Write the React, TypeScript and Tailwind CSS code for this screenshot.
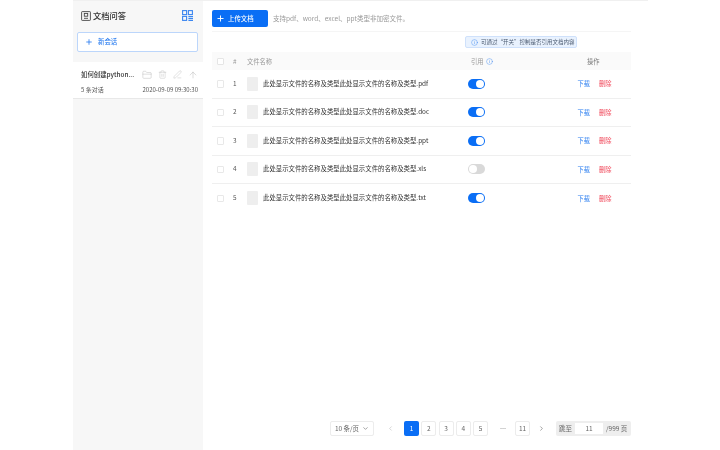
import React from "react";
import { Plus, FolderClosed, Trash2, PenLine, ArrowUp, Info, ChevronDown, ChevronLeft, ChevronRight } from "lucide-react";

const rows = [
  { n: 1, ext: "pdf", on: true },
  { n: 2, ext: "doc", on: true },
  { n: 3, ext: "ppt", on: true },
  { n: 4, ext: "xls", on: false },
  { n: 5, ext: "txt", on: true },
];

function Box({ children, active }: { children: React.ReactNode; active?: boolean }) {
  return (
    <div className={active ? "flex h-[15px] w-[15px] items-center justify-center rounded-[2px] bg-[#0a6ef5] text-white" : "flex h-[15px] w-[15px] items-center justify-center rounded-[2px] border border-[#ececec] bg-white text-[#666]"}>
      {children}
    </div>
  );
}

export default function App() {
  return (
    <div className="h-[450px] w-[720px] overflow-hidden bg-white text-[6.4px] text-[#333] blur-[0.25px] [font-family:'Noto_Sans_CJK_SC','Inter',sans-serif]">
      <div className="ml-[73px] flex h-full w-[575px] border-t border-[#f0f0f0]">
        <aside className="flex h-full w-[130px] shrink-0 flex-col bg-[#f7f7f7]">
          <div className="flex h-[31px] items-center justify-between pb-[2px] pl-[8px] pr-[10px]">
            <div className="flex items-center gap-[2px]">
              <svg width="10" height="10" viewBox="0 0 10 10" fill="none" stroke="#444" strokeWidth="0.9">
                <rect x="0.6" y="0.6" width="8.8" height="8.8" rx="0.6" />
                <rect x="3.3" y="2.4" width="3.4" height="2.8" />
                <path d="M3 7.3h4" />
              </svg>
              <span className="text-[8.25px] font-medium text-[#333]">文档问答</span>
            </div>
            <svg width="11" height="11" viewBox="0 0 11 11" fill="none" stroke="#3b86f0" strokeWidth="1.1">
              <rect x="0.6" y="0.6" width="4" height="4" />
              <rect x="0.6" y="6.4" width="4" height="4" />
              <rect x="6.4" y="0.6" width="4" height="4" />
              <path d="M6.4 6.6H11M6.4 8.5H11M6.4 10.4H11" />
            </svg>
          </div>
          <div className="ml-[4px] mr-[5px] flex h-[20px] items-center gap-[5px] rounded-[2px] border border-[#bcd6fb] bg-white pl-[7px] text-[#2b7ef0]">
            <Plus size={8} strokeWidth={2.5} />
            <span className="font-medium">新会话</span>
          </div>
          <div className="mt-[10px] flex h-[36.5px] flex-col justify-end gap-[6px] border-b border-[#e8e8e8] bg-white pb-[4px] pl-[8px] pr-[5px]">
            <div className="flex items-center justify-between">
              <span className="font-medium text-[#333]">如何创建python...</span>
              <div className="flex items-center gap-[6px] text-[#aaaaaa]">
                <FolderClosed size={10} strokeWidth={0.9} />
                <Trash2 size={9} strokeWidth={0.9} />
                <PenLine size={9} strokeWidth={0.9} />
                <ArrowUp size={10} strokeWidth={1} />
              </div>
            </div>
            <div className="flex items-center justify-between text-[6px] leading-[8px] text-[#555]">
              <span>5 条对话</span>
              <span>2020-09-09 09:30:30</span>
            </div>
          </div>
        </aside>
        <main className="flex min-w-0 flex-1 flex-col pl-[9px] pr-[17px]">
          <div className="flex h-[31px] items-start gap-[5px] border-b border-[#f5f5f5] pt-[9px]">
            <div className="flex h-[17px] w-[56px] items-center gap-[3px] rounded-[2px] bg-[#0a6ef5] pl-[4px] text-white">
              <Plus size={9} strokeWidth={2.5} />
              <span className="font-medium">上传文档</span>
            </div>
            <span className="text-[6.5px] leading-[17px] text-[#999]">支持pdf、word、excel、ppt类型非加密文件。</span>
          </div>
          <div className="mt-[4px] flex justify-start pl-[253px]">
            <div className="flex h-[12px] w-[112px] items-center gap-[3px] rounded-[2px] border border-[#cfe1fb] bg-[#e9f2fe] pl-[5px] text-[5.5px] text-[#4b5a70]">
              <Info size={7} strokeWidth={1.3} className="shrink-0 text-[#2b7ef0]" />
              <span className="whitespace-nowrap">可通过“开关”控制是否引用文档内容</span>
            </div>
          </div>
          <div className="mt-[4px] flex h-[18px] items-center bg-[#fafafa] pt-[1px] text-[6.25px] text-[#999]">
            <div className="ml-[4.5px] h-[7.5px] w-[7.5px] rounded-[1px] border border-[#e5e5e5] bg-white" />
            <span className="ml-[9px] w-[14px]">#</span>
            <span className="w-[224px]">文件名称</span>
            <span className="flex w-[116px] items-center gap-[2px]">引用<Info size={7} strokeWidth={1.3} className="text-[#2b7ef0]" /></span>
            <span className="text-[#777]">操作</span>
          </div>
          {rows.map((r) => (
            <div key={r.n} className={r.n === 5 ? "flex h-[28.5px] items-center" : "flex h-[28.5px] items-center border-b border-[#efefef]"}>
              <div className="ml-[4.5px] h-[7.5px] w-[7.5px] rounded-[1px] border border-[#e8e8e8] bg-white" />
              <span className="ml-[9px] w-[14px] text-[#555]">{r.n}</span>
              <div className="h-[14px] w-[11px] rounded-[1px] bg-[#eeeeee]" />
              <span className="ml-[5px] w-[205px] text-[#333]">此处显示文件的名称及类型此处显示文件的名称及类型.{r.ext}</span>
              <div className={r.on ? "flex h-[10px] w-[17px] items-center justify-end rounded-full bg-[#0a6ef5] pr-[1px]" : "flex h-[10px] w-[17px] items-center justify-start rounded-full bg-[#d9d9d9] pl-[1px]"}>
                <div className="h-[8px] w-[8px] rounded-full bg-white" />
              </div>
              <span className="ml-[92.5px] text-[6.25px] text-[#2b7ef0]">下载</span>
              <span className="ml-[9px] text-[6.25px] text-[#f0485a]">删除</span>
            </div>
          ))}
          <div className="flex flex-1 items-end justify-end pb-[14px]">
            <div className="flex items-center text-[6.5px] text-[#666]">
              <div className="flex h-[15px] w-[44px] items-center justify-center gap-[3px] rounded-[2px] border border-[#ececec]">
                <span>10 条/页</span>
                <ChevronDown size={7} />
              </div>
              <ChevronLeft size={7} className="ml-[13px] mr-[10px] text-[#bbb]" />
              <div className="flex items-center gap-[2.25px]">
                <Box active>1</Box>
                <Box>2</Box>
                <Box>3</Box>
                <Box>4</Box>
                <Box>5</Box>
              </div>
              <span className="flex w-[27px] justify-center pl-[3px] text-[7px] leading-none [font-family:'Inter',sans-serif]">···</span>
              <Box>11</Box>
              <ChevronRight size={7} className="ml-[8px] mr-[11px]" />
              <div className="flex h-[15px] w-[75px] items-center rounded-[2px] bg-[#eeeeee] pl-[3px]">
                <span>跳至</span>
                <div className="mx-[3px] flex h-[11px] w-[28px] items-center justify-center bg-white">11</div>
                <span>/999 页</span>
              </div>
            </div>
          </div>
        </main>
      </div>
    </div>
  );
}
